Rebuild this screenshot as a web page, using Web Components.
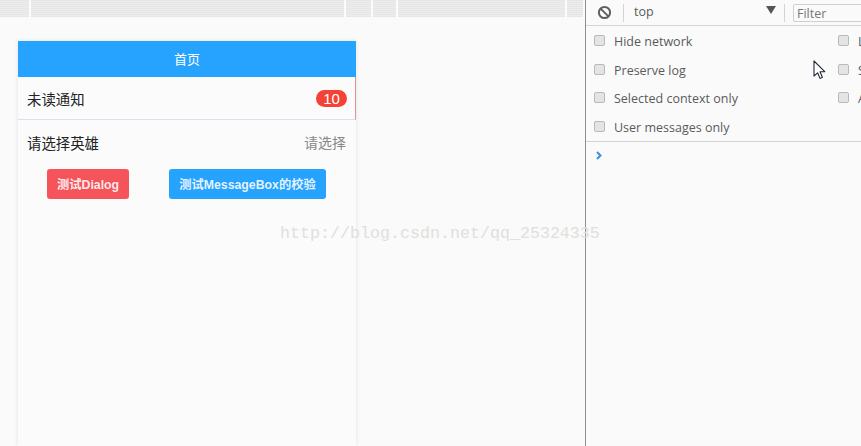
<!DOCTYPE html>
<html>
<head>
<meta charset="utf-8">
<style>
    html, body { margin: 0; padding: 0; height: 100%; background: #fafafa; overflow: hidden; }
    body { font-family: "Open Sans", "Noto Sans CJK SC", sans-serif; }
    demo-page { height: 446px; }
</style>
</head>
<body>
<demo-page>
    <top-strip slot="strip"></top-strip>
    <phone-app slot="app">
        <app-header>首页</app-header>
        <badge-cell label="未读通知" count="10"></badge-cell>
        <select-cell label="请选择英雄" value="请选择"></select-cell>
        <app-button color="#f4545a" width="82" slot="buttons">测试Dialog</app-button>
        <app-button color="#26a2ff" width="157" slot="buttons">测试MessageBox的校验</app-button>
    </phone-app>
    <dev-console slot="console"></dev-console>
</demo-page>
<script>
"use strict";

class DemoPage extends HTMLElement {
    connectedCallback() {
        const shadowRoot = this.attachShadow({ mode: 'open' });
        shadowRoot.innerHTML = `
        <style>
            :host { display: grid; grid-template-columns: 585px 276px; position: relative; overflow: hidden; }
            .left { display: flex; flex-direction: column; min-height: 0; }
            .main { flex: 1; min-height: 0; padding: 24px 229px 0 18px; }
            .right { border-left: 1px solid #8f8f8f; min-height: 0; }
            .mark {
                position: absolute; left: 280px; top: 224px;
                font: 16.67px "Liberation Mono", monospace;
                color: #e0e0dc; white-space: nowrap;
            }
            .cursor { position: absolute; left: 813px; top: 60px; width: 13px; height: 20px; }
        </style>
        <div class="left">
            <slot name="strip"></slot>
            <div class="main"><slot name="app"></slot></div>
        </div>
        <div class="right"><slot name="console"></slot></div>
        <div class="mark">http://blog.csdn.net/qq_25324335</div>
        <svg class="cursor" viewBox="0 0 13 20">
            <path d="M1 1 L1 16 L4.6 12.8 L7 18.4 L9.4 17.3 L7 11.8 L11.8 11.6 Z" fill="#fff" stroke="#23283a" stroke-width="1.1" stroke-linejoin="round"/>
        </svg>
        `;
    }
}

class TopStrip extends HTMLElement {
    connectedCallback() {
        const shadowRoot = this.attachShadow({ mode: 'open' });
        shadowRoot.innerHTML = `
        <style>
            :host { display: block; }
            .strip {
                display: flex; height: 17px; margin-right: 2px;
                background: repeating-linear-gradient(0deg, #e6e6e6 0 1px, #ececec 1px 2px);
            }
            i { display: block; width: 2px; background: #fbfbfb; }
            .first { margin-left: 29px; margin-right: 313px; }
            .a { margin-right: 25px; }
            .b { margin-right: 23px; }
            .c { margin-right: 167px; }
        </style>
        <div class="strip">
            <i class="first"></i><i class="a"></i><i class="b"></i><i class="c"></i><i></i>
        </div>
        `;
    }
}

class PhoneApp extends HTMLElement {
    connectedCallback() {
        const shadowRoot = this.attachShadow({ mode: 'open' });
        shadowRoot.innerHTML = `
        <style>
            :host {
                display: block; height: 100%; background: #fbfbfb;
                box-shadow: 0 0 4px rgba(0, 0, 0, 0.1);
            }
            .buttons { display: flex; padding: 4px 30px 0 29px; justify-content: space-between; }
        </style>
        <slot></slot>
        <div class="buttons"><slot name="buttons"></slot></div>
        `;
    }
}

class AppHeader extends HTMLElement {
    connectedCallback() {
        const shadowRoot = this.attachShadow({ mode: 'open' });
        shadowRoot.innerHTML = `
        <style>
            :host {
                display: flex; height: 36px; box-sizing: border-box; padding-bottom: 2px;
                align-items: center; justify-content: center;
                background: #26a2ff; color: #fff; font-size: 13px;
            }
        </style>
        <slot></slot>
        `;
    }
}

class BadgeCell extends HTMLElement {
    connectedCallback() {
        const shadowRoot = this.attachShadow({ mode: 'open' });
        shadowRoot.innerHTML = `
        <style>
            :host {
                display: flex; height: 43px; box-sizing: border-box; align-items: center;
                justify-content: space-between; padding: 0 9px;
                border-bottom: 1px solid #d9dfee; border-right: 1px solid #e58f96;
                color: #222; font-size: 14.4px;
            }
            .badge {
                width: 31px; height: 17px; border-radius: 9px; background: #f44336; color: #fff;
                font: 15px/17px "Liberation Sans", sans-serif; text-align: center; margin: 0 -1px 0 0;
            }
        </style>
        <span>${this.getAttribute('label')}</span>
        <span class="badge">${this.getAttribute('count')}</span>
        `;
    }
}

class SelectCell extends HTMLElement {
    connectedCallback() {
        const shadowRoot = this.attachShadow({ mode: 'open' });
        shadowRoot.innerHTML = `
        <style>
            :host {
                display: flex; height: 45px; box-sizing: border-box; align-items: center;
                justify-content: space-between; padding: 0 10px 0 9px;
                color: #222; font-size: 14.4px;
            }
            .value { color: #888; font-size: 14px; margin-top: -2px; }
        </style>
        <span>${this.getAttribute('label')}</span>
        <span class="value">${this.getAttribute('value')}</span>
        `;
    }
}

class AppButton extends HTMLElement {
    connectedCallback() {
        const shadowRoot = this.attachShadow({ mode: 'open' });
        shadowRoot.innerHTML = `
        <style>
            :host { display: block; }
            button {
                display: block; width: ${this.getAttribute('width')}px; height: 30px; padding: 0; border: 0; border-radius: 3px;
                background: ${this.getAttribute('color')}; color: rgba(255, 255, 255, 0.88);
                font: 700 12.3px "Liberation Sans", "Noto Sans CJK SC", sans-serif;
            }
        </style>
        <button><slot></slot></button>
        `;
    }
}

class DevConsole extends HTMLElement {
    connectedCallback() {
        const shadowRoot = this.attachShadow({ mode: 'open' });
        shadowRoot.innerHTML = `
        <style>
            :host { display: block; font: 12.5px "Open Sans", sans-serif; color: #5a5a5a; overflow: hidden; }
            .bar {
                display: flex; align-items: center; height: 26px; box-sizing: border-box;
                border-bottom: 1px solid #d4d4d4; padding-left: 11px;
            }
            .bar svg { width: 15px; height: 15px; flex: none; }
            .sep { width: 1px; height: 18px; background: #d4d4d4; flex: none; }
            .top { width: 132px; margin-left: 10px; padding-bottom: 2px; flex: none; }
            .arrow {
                width: 0; height: 0; flex: none; margin: 0 8px 5px 0;
                border: 5px solid transparent; border-top: 8px solid #555; border-bottom: 0;
            }
            .filter {
                flex: none; width: 80px; height: 18px; box-sizing: border-box; margin-left: 8px;
                border: 1px solid #cfcfcf; border-radius: 2px; padding-left: 3px;
                line-height: 18px; color: #777; white-space: nowrap;
            }
            .options {
                display: grid; grid-template-columns: 244px 1fr; height: 116px; box-sizing: border-box;
                grid-template-rows: 28px 30px 27px 30px; padding: 1px 0 0 8px;
                border-bottom: 1px solid #d4d4d4;
            }
            .prompt { display: block; margin: 9px 0 0 9px; width: 8px; height: 9px; }
        </style>
        <div class="bar">
            <svg viewBox="0 0 15 15"><circle cx="7.5" cy="7.5" r="5.6" fill="none" stroke="#5f5f5f" stroke-width="2"/><path d="M3.6 3.6 L11.4 11.4" stroke="#5f5f5f" stroke-width="2"/></svg>
            <span class="sep" style="margin-left:11px"></span>
            <span class="top">top</span>
            <span class="arrow"></span>
            <span class="sep"></span>
            <span class="filter">Filter</span>
        </div>
        <div class="options">
            <console-check>Hide network</console-check><console-check>L</console-check>
            <console-check>Preserve log</console-check><console-check>S</console-check>
            <console-check>Selected context only</console-check><console-check>A</console-check>
            <console-check>User messages only</console-check>
        </div>
        <svg class="prompt" viewBox="0 0 8 9"><path d="M2 1 L5.5 4.5 L2 8" fill="none" stroke="#3b8fe0" stroke-width="2"/></svg>
        `;
    }
}

class ConsoleCheck extends HTMLElement {
    connectedCallback() {
        const shadowRoot = this.attachShadow({ mode: 'open' });
        shadowRoot.innerHTML = `
        <style>
            :host { display: flex; align-items: center; white-space: nowrap; }
            i {
                display: block; flex: none; width: 9px; height: 9px; margin: -2px 9px 0 0;
                border: 1px solid #b9b9b9; border-radius: 2px; background: #e4e4e4;
            }
        </style>
        <i></i><slot></slot>
        `;
    }
}

customElements.define('demo-page', DemoPage);
customElements.define('top-strip', TopStrip);
customElements.define('phone-app', PhoneApp);
customElements.define('app-header', AppHeader);
customElements.define('badge-cell', BadgeCell);
customElements.define('select-cell', SelectCell);
customElements.define('app-button', AppButton);
customElements.define('dev-console', DevConsole);
customElements.define('console-check', ConsoleCheck);
</script>
</body>
</html>
